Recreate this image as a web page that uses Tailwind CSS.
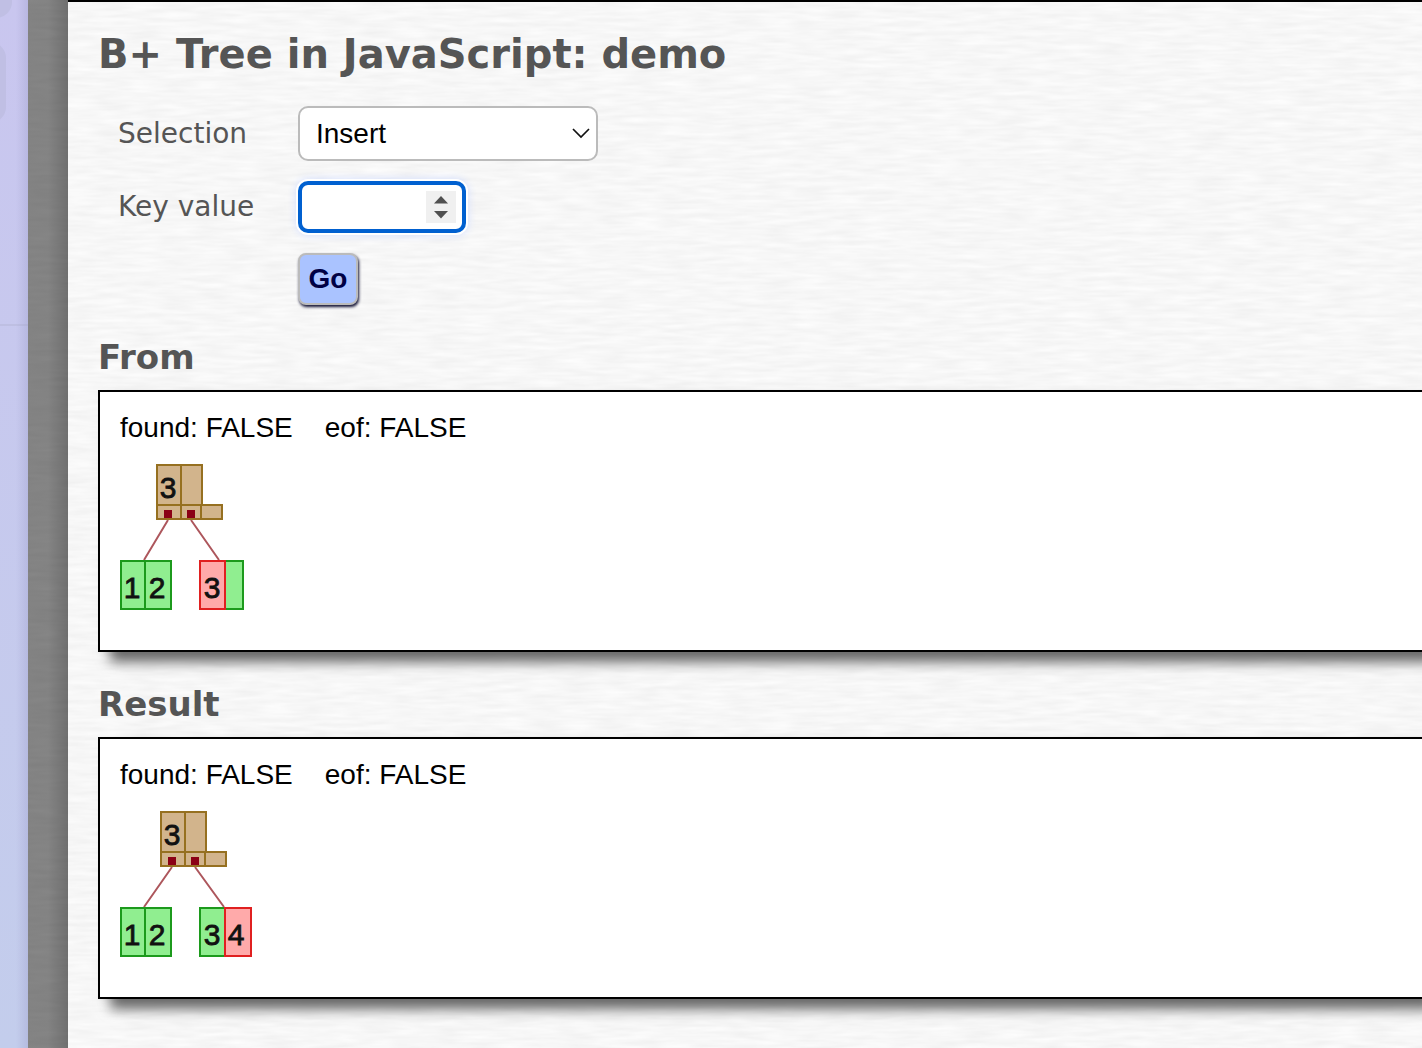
<!DOCTYPE html>
<html lang="en">
<head>
    <meta charset="UTF-8">
    <meta name="viewport" content="width=device-width, initial-scale=1.0">
    <title>B+ Tree in JavaScript: demo</title>
    <script src="https://cdn.jsdelivr.net/npm/@tailwindcss/browser@4"></script>
</head>
<body class="flex min-h-screen overflow-x-hidden bg-[#f7f7f7] text-[#555] font-['DejaVu_Sans',Verdana,sans-serif]">

    <!-- Page behind the frame -->
    <div class="relative w-7 shrink-0 overflow-hidden bg-linear-to-b from-[#c9c6ef] to-[#c3cdec]">
        <div class="absolute -top-10 -left-10 h-[58px] w-[52px] rounded-2xl bg-[#c0bfe4]"></div>
        <div class="absolute top-[42px] -left-10 h-[81px] w-[46px] rounded-2xl bg-[#c0bfe4]"></div>
        <div class="absolute top-[324px] left-0 h-[2px] w-full bg-[#bebfe2]"></div>
        <div class="absolute inset-y-0 right-0 w-3 bg-linear-to-r from-[#9a9ac8]/0 to-[#9a9ac8]/35"></div>
    </div>

    <div class="relative isolate flex grow">
        <!-- Paper grain -->
        <svg class="pointer-events-none absolute inset-0 -z-10 h-full w-full" aria-hidden="true">
            <filter id="grain" x="0" y="0" width="100%" height="100%" color-interpolation-filters="sRGB">
                <feTurbulence type="fractalNoise" baseFrequency="0.03 0.22" numOctaves="2" seed="4"/>
                <feColorMatrix values="0.06 0 0 0 0.938  0.06 0 0 0 0.938  0.06 0 0 0 0.938  0 0 0 0 1"/>
            </filter>
            <rect width="100%" height="100%" filter="url(#grain)"/>
        </svg>

        <div class="w-10 shrink-0 bg-linear-to-r from-black/47 via-black/47 to-black/55"></div>

        <main class="min-w-0 grow border-t-2 border-black pt-7 pl-[30px]">
            <h1 class="text-[40px] leading-12 font-bold whitespace-nowrap">B+ Tree in JavaScript: demo</h1>

            <form id="treeForm" class="mt-7 grid grid-cols-[180px_auto] items-center justify-start gap-y-5 pl-5 text-[28px] leading-8">
                <label for="selection">Selection</label>
                <div class="relative w-[300px]">
                    <select id="selection" class="h-[55px] w-full appearance-none rounded-[10px] border-2 border-[#bbb] bg-white pl-4 font-['Liberation_Sans',Arial,sans-serif] text-black">
                        <option>Insert</option>
                        <option>Delete</option>
                        <option>Seek</option>
                    </select>
                    <svg class="pointer-events-none absolute top-5 right-2 h-4 w-[18px]" viewBox="0 0 18 16" fill="none" stroke="#111" stroke-width="1.7">
                        <path d="M1 3L9 11L17 3"/>
                    </svg>
                </div>

                <label for="keyValue">Key value</label>
                <div class="relative w-[168px]">
                    <input id="keyValue" type="number" class="block h-[52px] w-full rounded-[10px] border-4 border-[#0060d0] bg-white pr-11 pl-3 font-['Liberation_Sans',Arial,sans-serif] text-black shadow-[0_0_0_2px_#fff,0_0_8px_2px_#d3deff] outline-none [appearance:textfield]">
                    <svg class="pointer-events-none absolute top-[10px] right-[10px] h-8 w-[30px] bg-[#f0f0f0]" viewBox="0 0 30 32" fill="#505050">
                        <path d="M8 12.500L15 5L22 12.500Z"/>
                        <path d="M8 20H22L15 27.500Z"/>
                    </svg>
                </div>

                <button id="goBtn" type="submit" class="col-start-2 h-[52px] w-[60px] rounded-lg border-2 border-[#bbb] bg-[#aac3ff] font-['Liberation_Sans',Arial,sans-serif] font-bold text-[#004] shadow-[1px_2px_3px_#113]">Go</button>
            </form>

            <h2 class="mt-[30px] mb-[10px] text-[34px] leading-[45px] font-bold">From</h2>
            <section class="border-2 border-r-0 border-black bg-white p-5 font-['Liberation_Sans',Arial,sans-serif] text-[28px] leading-8 text-black shadow-[12px_10px_12px_#666]">
                <p class="flex gap-8"><span>found: FALSE</span><span>eof: FALSE</span></p>
                <svg class="mt-4 block h-[170px] w-[200px]" viewBox="0 0 200 170" font-size="30" text-anchor="middle" fill="#111">
                    <g fill="#d2b48c" stroke="#967020" stroke-width="2">
                        <rect x="37" y="5" width="24" height="40"/>
                        <rect x="61" y="5" width="21" height="40"/>
                        <rect x="37" y="45" width="24" height="14"/>
                        <rect x="61" y="45" width="20" height="14"/>
                        <rect x="81" y="45" width="21" height="14"/>
                    </g>
                    <g fill="#8b0015">
                        <rect x="44" y="50" width="8" height="8"/>
                        <rect x="67" y="50" width="8" height="8"/>
                    </g>
                    <path d="M48 60L24 100M71 60L99 100" stroke="#ad565c" stroke-width="2"/>
                    <g fill="#90ee90" stroke="#1c9a1c" stroke-width="2">
                        <rect x="1" y="101" width="24" height="48"/>
                        <rect x="25" y="101" width="26" height="48"/>
                        <rect x="105" y="101" width="18" height="48"/>
                    </g>
                    <rect x="80" y="101" width="25" height="48" fill="#faa" stroke="#e02020" stroke-width="2"/>
                    <g stroke="#111" stroke-width="0.8">
                        <text x="48" y="38">3</text>
                        <text x="12" y="138">1</text>
                        <text x="37" y="138">2</text>
                        <text x="92" y="138">3</text>
                    </g>
                </svg>
            </section>

            <h2 class="mt-[30px] mb-[10px] text-[34px] leading-[45px] font-bold">Result</h2>
            <section class="border-2 border-r-0 border-black bg-white p-5 font-['Liberation_Sans',Arial,sans-serif] text-[28px] leading-8 text-black shadow-[12px_10px_12px_#666]">
                <p class="flex gap-8"><span>found: FALSE</span><span>eof: FALSE</span></p>
                <svg class="mt-4 block h-[170px] w-[200px]" viewBox="0 0 200 170" font-size="30" text-anchor="middle" fill="#111">
                    <g fill="#d2b48c" stroke="#967020" stroke-width="2">
                        <rect x="41" y="5" width="24" height="40"/>
                        <rect x="65" y="5" width="21" height="40"/>
                        <rect x="41" y="45" width="24" height="14"/>
                        <rect x="65" y="45" width="20" height="14"/>
                        <rect x="85" y="45" width="21" height="14"/>
                    </g>
                    <g fill="#8b0015">
                        <rect x="48" y="50" width="8" height="8"/>
                        <rect x="71" y="50" width="8" height="8"/>
                    </g>
                    <path d="M52 60L24 100M75 60L104 100" stroke="#ad565c" stroke-width="2"/>
                    <g fill="#90ee90" stroke="#1c9a1c" stroke-width="2">
                        <rect x="1" y="101" width="24" height="48"/>
                        <rect x="25" y="101" width="26" height="48"/>
                        <rect x="80" y="101" width="25" height="48"/>
                    </g>
                    <rect x="105" y="101" width="26" height="48" fill="#faa" stroke="#e02020" stroke-width="2"/>
                    <g stroke="#111" stroke-width="0.8">
                        <text x="52" y="38">3</text>
                        <text x="12" y="138">1</text>
                        <text x="37" y="138">2</text>
                        <text x="92" y="138">3</text>
                        <text x="116" y="138">4</text>
                    </g>
                </svg>
            </section>
        </main>
    </div>

    <script>
        document.getElementById('treeForm').addEventListener('submit', function(e) {
            e.preventDefault();
        });
    </script>
</body>
</html>
